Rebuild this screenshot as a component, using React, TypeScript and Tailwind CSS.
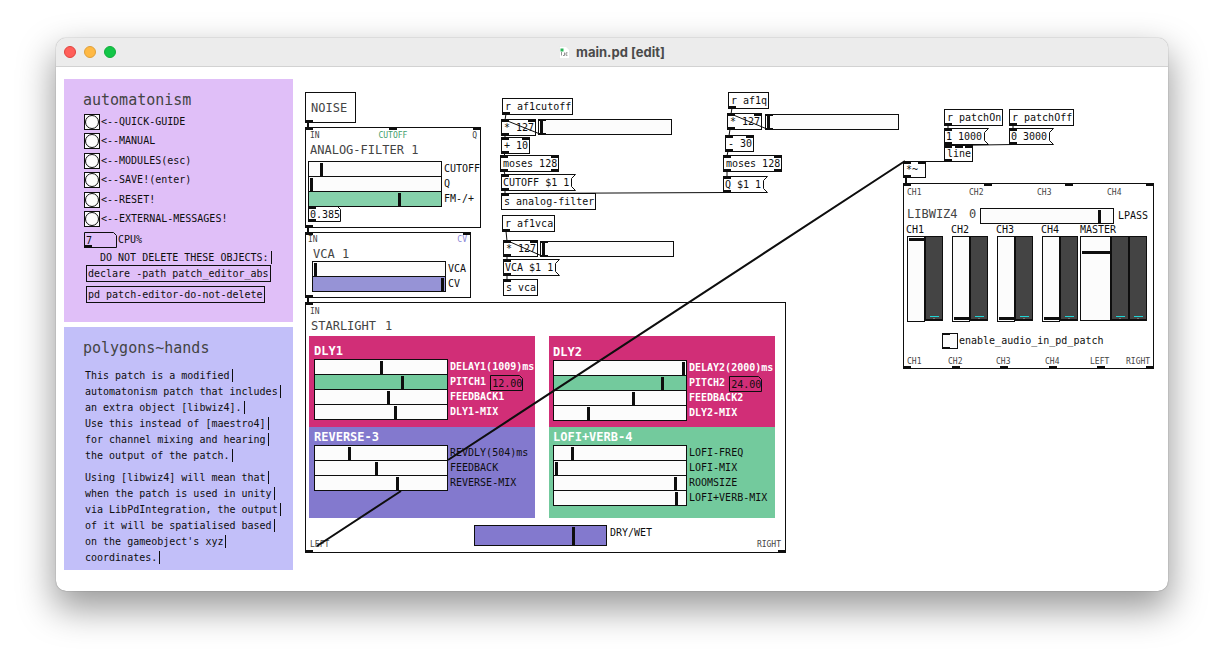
import { useId, type ReactNode } from "react";

function Ports({ count, side }: { count: number; side: "top" | "bottom" }) {
  if (count === 0) return null;
  return (
    <span
      aria-hidden="true"
      className={`pointer-events-none absolute -inset-x-px flex justify-between ${
        side === "top" ? "-top-px" : "-bottom-px"
      }`}
    >
      {Array.from({ length: count }, (_, i) => (
        <span key={i} className="h-[3px] w-2 bg-[#0e0e0e]" />
      ))}
    </span>
  );
}

type NodeProps = { at: string; ins?: number; outs?: number; children: ReactNode };

function Obj({ at, ins = 0, outs = 0, children }: NodeProps) {
  return (
    <div className={`absolute h-[17px] whitespace-pre border border-[#0e0e0e] pr-px pl-[2px] leading-[15px] ${at}`}>
      <Ports count={ins} side="top" />
      {children}
      <Ports count={outs} side="bottom" />
    </div>
  );
}

function Message({ at, children }: NodeProps) {
  return (
    <div className={`absolute flex h-[17px] ${at}`}>
      <div className="relative whitespace-pre border-y border-l border-[#0e0e0e] pr-px pl-px leading-[15px]">
        {children}
        <span className="absolute -top-px -left-px h-[3px] w-2 bg-[#0e0e0e]" />
        <span className="absolute -bottom-px -left-px h-[3px] w-2 bg-[#0e0e0e]" />
      </div>
      <svg width="6" height="17" viewBox="0 0 6 17" fill="none" stroke="#0e0e0e" aria-hidden="true">
        <path d="M0 .5H5.500L1.500 4.500V12.500L5.500 16.500H0" />
      </svg>
    </div>
  );
}

const thumb =
  "[&::-webkit-slider-thumb]:w-[3px] [&::-webkit-slider-thumb]:appearance-none [&::-webkit-slider-thumb]:bg-[#0e0e0e]";

function HSlider({
  id,
  label,
  value,
  look = "h-4 bg-[#fcfcfc]",
  size = "w-[134px] [&::-webkit-slider-thumb]:h-[13px]",
}: {
  id?: string;
  label?: string;
  value: number;
  look?: string;
  size?: string;
}) {
  return (
    <input
      id={id}
      aria-label={label}
      type="range"
      min={0}
      max={129}
      defaultValue={value}
      className={`m-0 block shrink-0 appearance-none border border-[#0e0e0e] ${thumb} ${size} ${look}`}
    />
  );
}

function SliderRow({
  label,
  value,
  look,
  tone = "",
  children,
}: {
  label: string;
  value: number;
  look?: string;
  tone?: string;
  children?: ReactNode;
}) {
  const id = useId();
  return (
    <div className="-mt-px flex h-4 gap-[2px] whitespace-nowrap first:mt-0">
      <HSlider id={id} value={value} look={look} />
      <label htmlFor={id} className={`leading-4 ${tone}`}>
        {label}
      </label>
      {children}
    </div>
  );
}

function NumberBox({ value, label, id }: { value: string; label?: string; id?: string }) {
  return (
    <span className="relative block h-4 w-[33px]">
      <svg
        className="absolute inset-0"
        width="33"
        height="16"
        viewBox="0 0 33 16"
        fill="none"
        stroke="#0e0e0e"
        aria-hidden="true"
      >
        <path d="M.5 .5H29.500L32.500 3.500V15.500H.5Z" />
      </svg>
      <input
        id={id}
        aria-label={label}
        defaultValue={value}
        className="relative block h-4 w-full bg-transparent pt-px pl-[2px] leading-[15px] outline-none"
      />
    </span>
  );
}

function Bang({ label }: { label: string }) {
  const id = useId();
  return (
    <li className="flex h-4 gap-px">
      <button id={id} type="button" className="h-4 w-4 border border-[#0e0e0e] bg-[#fcfcfc]">
        <svg width="14" height="14" viewBox="0 0 14 14" fill="none" stroke="#0e0e0e" aria-hidden="true">
          <circle cx="7" cy="7" r="6.500" />
        </svg>
      </button>
      <label htmlFor={id} className="leading-[15px]">
        {label}
      </label>
    </li>
  );
}

function CommentLines({ lines }: { lines: string[] }) {
  return (
    <p>
      {lines.map((line) => (
        <span key={line} className="flex h-4 items-center">
          <span className="whitespace-pre border-r border-[#0e0e0e] pr-[2px] leading-[13px]">{line}</span>
        </span>
      ))}
    </p>
  );
}

function VSlider({ label, value, look }: { label: string; value: number; look: string }) {
  return (
    <input
      type="range"
      aria-label={label}
      min={0}
      max={100}
      defaultValue={value}
      className={`m-0 block appearance-none border border-[#0e0e0e] bg-[#fcfcfc] [direction:rtl] [writing-mode:vertical-lr] [&::-webkit-slider-thumb]:h-[3px] [&::-webkit-slider-thumb]:appearance-none [&::-webkit-slider-thumb]:bg-[#0e0e0e] ${look}`}
    />
  );
}

function Meter() {
  return (
    <span className="flex h-[85px] w-[18px] flex-col items-center justify-end border-x border-t border-b-2 border-[#0e0e0e] bg-[#444]">
      <span className="h-px w-[9px] bg-[#1fd6d6]" />
      <span className="mt-px h-px w-[2px] bg-[#777]" />
    </span>
  );
}

function Sidebar() {
  const cpu = useId();
  return (
    <aside className="flex w-[229px] shrink-0 flex-col gap-[5px]">
      <section className="h-[243px] bg-[#e0bff8] pt-3 pl-5">
        <h2 className="-ml-px text-[15px] leading-[18px] text-[#444]">automatonism</h2>
        <ul className="mt-[5px] flex h-[113px] flex-col justify-between">
          {[
            "<--QUICK-GUIDE",
            "<--MANUAL",
            "<--MODULES(esc)",
            "<--SAVE!(enter)",
            "<--RESET!",
            "<--EXTERNAL-MESSAGES!",
          ].map((label) => (
            <Bang key={label} label={label} />
          ))}
        </ul>
        <div className="relative mt-[5px] flex gap-px">
          <NumberBox id={cpu} value="7" />
          <label htmlFor={cpu} className="leading-[15px]">
            CPU%
          </label>
          <span className="absolute bottom-0 left-0 h-[3px] w-2 bg-[#0e0e0e]" />
        </div>
        <div className="mt-px ml-4">
          <CommentLines lines={["DO NOT DELETE THESE OBJECTS:"]} />
        </div>
        <div className="ml-[2px] flex flex-col items-start gap-1">
          <div className="h-[17px] border border-[#0e0e0e] px-px leading-[15px]">
            declare -path patch_editor_abs
          </div>
          <div className="h-[17px] border border-[#0e0e0e] px-px leading-[15px]">
            pd patch-editor-do-not-delete
          </div>
        </div>
      </section>
      <section className="bg-[#c2bff9] pt-3 pb-[5px] pl-5">
        <h2 className="-ml-px text-[15px] leading-[18px] text-[#444]">polygons~hands</h2>
        <div className="mt-[10px] ml-px flex flex-col gap-[6px]">
          <CommentLines
            lines={[
              "This patch is a modified",
              "automatonism patch that includes",
              "an extra object [libwiz4].",
              "Use this instead of [maestro4]",
              "for channel mixing and hearing",
              "the output of the patch.",
            ]}
          />
          <CommentLines
            lines={[
              "Using [libwiz4] will mean that",
              "when the patch is used in unity",
              "via LibPdIntegration, the output",
              "of it will be spatialised based",
              "on the gameobject's xyz",
              "coordinates.",
            ]}
          />
        </div>
      </section>
    </aside>
  );
}

function AnalogFilter() {
  return (
    <section className="absolute top-[48px] left-[5px] h-[101px] w-[176px] border border-[#0e0e0e] pt-[3px]">
      <Ports count={3} side="top" />
      <div className="flex justify-between pr-[3px] pl-1 text-[8px] leading-[10px] text-[#444]">
        <span>IN</span>
        <span className="pr-[6px] text-[#3fa06d]">CUTOFF</span>
        <span>Q</span>
      </div>
      <h3 className="mt-px pl-1 text-xs leading-4 text-[#444]">ANALOG-FILTER 1</h3>
      <div className="mt-[3px] pl-[2px]">
        <SliderRow label="CUTOFF" value={11} />
        <SliderRow label="Q" value={1} />
        <SliderRow label="FM-/+" value={89} look="h-4 bg-[#86d1ab]" />
        <div className="relative -mt-px">
          <NumberBox value="0.385" label="FM amount" />
          <span className="absolute top-0 left-0 h-[3px] w-2 bg-[#0e0e0e]" />
          <span className="absolute bottom-0 left-0 h-[3px] w-2 bg-[#0e0e0e]" />
        </div>
      </div>
      <Ports count={1} side="bottom" />
    </section>
  );
}

function Vca() {
  return (
    <section className="absolute top-[153px] left-[5px] h-[66px] w-[166px] border border-[#0e0e0e] pt-[2px]">
      <Ports count={2} side="top" />
      <div className="flex justify-between pr-[3px] pl-[2px] text-[8px] leading-[10px] text-[#444]">
        <span>IN</span>
        <span className="text-[#8a84d6]">CV</span>
      </div>
      <h3 className="mt-px pl-[7px] text-xs leading-4 text-[#444]">VCA 1</h3>
      <div className="-mt-px pl-[6px]">
        <SliderRow label="VCA" value={1} />
        <SliderRow label="CV" value={128} look="h-4 bg-[#9693d6]" />
      </div>
      <Ports count={1} side="bottom" />
    </section>
  );
}

function Starlight() {
  const wet = useId();
  return (
    <section className="absolute top-[223px] left-[5px] h-[251px] w-[481px] border border-[#0e0e0e] pt-[3px]">
      <Ports count={1} side="top" />
      <div className="pl-1 text-[8px] leading-[11px] text-[#444]">IN</div>
      <h3 className="mt-px flex gap-[9px] pl-[5px] text-xs leading-4 text-[#444]">
        <span>STARLIGHT</span>
        <span>1</span>
      </h3>
      <div className="mt-[2px] ml-[3px] grid grid-cols-[226px_226px] grid-rows-[91px_91px] gap-x-[14px]">
        <div className="bg-[#d12e77] pt-2 pl-[5px]">
          <h4 className="text-xs leading-[15px] font-bold text-white">DLY1</h4>
          <div>
            <SliderRow label="DELAY1(1009)ms" value={65} tone="font-bold text-white" />
            <SliderRow label="PITCH1" value={86} look="h-4 bg-[#73ca9d]" tone="font-bold text-white">
              <span className="mt-px ml-[2px]">
                <NumberBox value="12.00" label="Pitch 1 value" />
              </span>
            </SliderRow>
            <SliderRow label="FEEDBACK1" value={72} tone="font-bold text-white" />
            <SliderRow label="DLY1-MIX" value={79} tone="font-bold text-white" />
          </div>
        </div>
        <div className="bg-[#d12e77] pt-[9px] pl-1">
          <h4 className="text-xs leading-[15px] font-bold text-white">DLY2</h4>
          <div>
            <SliderRow label="DELAY2(2000)ms" value={128} tone="font-bold text-white" />
            <SliderRow label="PITCH2" value={107} look="h-4 bg-[#73ca9d]" tone="font-bold text-white">
              <span className="mt-px ml-[2px]">
                <NumberBox value="24.00" label="Pitch 2 value" />
              </span>
            </SliderRow>
            <SliderRow label="FEEDBACK2" value={78} tone="font-bold text-white" />
            <SliderRow label="DLY2-MIX" value={33} tone="font-bold text-white" />
          </div>
        </div>
        <div className="bg-[#8379ce] pt-[3px] pl-[5px]">
          <h4 className="text-xs leading-[15px] font-bold text-white">REVERSE-3</h4>
          <div>
            <SliderRow label="REVDLY(504)ms" value={33} />
            <SliderRow label="FEEDBACK" value={60} />
            <SliderRow label="REVERSE-MIX" value={81} />
          </div>
        </div>
        <div className="bg-[#73ca9d] pt-[3px] pl-1">
          <h4 className="text-xs leading-[15px] font-bold text-white">LOFI+VERB-4</h4>
          <div>
            <SliderRow label="LOFI-FREQ" value={17} />
            <SliderRow label="LOFI-MIX" value={1} />
            <SliderRow label="ROOMSIZE" value={120} />
            <SliderRow label="LOFI+VERB-MIX" value={121} />
          </div>
        </div>
      </div>
      <div className="mt-[7px] flex h-[25px] pr-1 pl-1">
        <span className="w-[164px] self-end text-[8px] leading-[10px] text-[#444]">LEFT</span>
        <HSlider
          id={wet}
          value={98}
          size="w-[133px] [&::-webkit-slider-thumb]:h-[18px]"
          look="h-[21px] bg-[#8379ce]"
        />
        <label htmlFor={wet} className="ml-[3px] leading-[15px]">
          DRY/WET
        </label>
        <span className="ml-auto self-end text-[8px] leading-[10px] text-[#444]">RIGHT</span>
      </div>
      <Ports count={2} side="bottom" />
    </section>
  );
}

function Libwiz() {
  const lpass = useId();
  const enable = useId();
  return (
    <section className="absolute top-[104px] left-[603px] h-[186px] w-[251px] border border-[#0e0e0e] pt-1 pl-[3px]">
      <Ports count={4} side="top" />
      <div className="grid grid-cols-[62px_68px_70px_auto] text-[8px] leading-[10px] text-[#444]">
        <span>CH1</span>
        <span>CH2</span>
        <span>CH3</span>
        <span>CH4</span>
      </div>
      <div className="mt-[10px] flex h-4 items-start">
        <h3 className="flex text-xs leading-[13px] text-[#444]">
          <span className="w-[62px]">LIBWIZ4</span>
          <span className="w-[11px]">0</span>
        </h3>
        <HSlider id={lpass} value={117} />
        <label htmlFor={lpass} className="ml-1 leading-4">
          LPASS
        </label>
      </div>
      <div className="flex">
        <div className="flex gap-[9px]">
          {[
            { name: "CH1", value: 99 },
            { name: "CH2", value: 1 },
            { name: "CH3", value: 1 },
            { name: "CH4", value: 1 },
          ].map(({ name, value }) => (
            <div key={name}>
              <div className="-ml-px leading-3">{name}</div>
              <div className="flex">
                <VSlider label={name} value={value} look="h-[86px] w-[18px] [&::-webkit-slider-thumb]:w-[15px]" />
                <Meter />
              </div>
            </div>
          ))}
        </div>
        <div className="ml-[2px]">
          <div className="leading-3">MASTER</div>
          <div className="flex">
            <VSlider label="Master" value={83} look="h-[85px] w-[31px] [&::-webkit-slider-thumb]:w-[28px]" />
            <Meter />
            <Meter />
          </div>
        </div>
      </div>
      <div className="mt-[11px] flex gap-px pl-[35px]">
        <span className="relative block h-4 w-4">
          <input id={enable} type="checkbox" className="block h-4 w-4 appearance-none border border-[#0e0e0e] bg-[#fcfcfc]" />
          <span className="absolute top-0 left-0 h-[2px] w-2 bg-[#0e0e0e]" />
          <span className="absolute bottom-0 left-0 h-[2px] w-2 bg-[#0e0e0e]" />
        </span>
        <label htmlFor={enable} className="leading-[15px]">
          enable_audio_in_pd_patch
        </label>
      </div>
      <div className="mt-2 grid grid-cols-[41px_48px_49px_45px_36px_auto] text-[8px] leading-[10px] text-[#444]">
        <span>CH1</span>
        <span>CH2</span>
        <span>CH3</span>
        <span>CH4</span>
        <span>LEFT</span>
        <span>RIGHT</span>
      </div>
      <Ports count={6} side="bottom" />
    </section>
  );
}

function Wires() {
  return (
    <svg
      className="pointer-events-none absolute top-0 left-0"
      width="868"
      height="491"
      viewBox="300 79 868 491"
      fill="none"
      stroke="#0e0e0e"
      aria-hidden="true"
    >
      <g strokeWidth="2">
        <path d="M308 122V128M308 227V233M308 297V303M906 177V184" />
        <path d="M317 546L401 491M448 460L905 161" />
      </g>
      <path d="M506 114L505 120M505 135V138M505 153L504 156M504 171L505 175M505 190V194" />
      <path d="M540 134L505 120M542 256L508 241M767 129L731 114" />
      <path d="M506 231L507 241M507 256V260M507 275V280" />
      <path d="M732 108L731 114M730 129L729 136M728 151L727 156M727 171V177M727 192.500L505 193.500" />
      <path d="M948 125V129M1013 125V129M948 144V146M1013 144.500L948 145.500M948 161.500H922" />
    </svg>
  );
}

function Patch() {
  return (
    <main className="relative min-h-[491px] flex-1">
      <div className="absolute top-[13px] left-[5px] h-[31px] w-[51px] border border-[#0e0e0e] pl-[5px] text-xs leading-[30px] text-[#444]">
        NOISE
        <Ports count={1} side="bottom" />
      </div>
      <AnalogFilter />
      <Vca />
      <Starlight />

      <Obj at="left-[202px] top-[19px]" outs={1}>r af1cutoff</Obj>
      <Obj at="left-[201px] top-[40px]" ins={2} outs={1}>* 127</Obj>
      <div className="absolute top-[40px] left-[238px]">
        <HSlider label="Cutoff depth" value={1} />
        <span className="absolute top-0 left-0 h-[2px] w-2 bg-[#0e0e0e]" />
        <span className="absolute bottom-0 left-0 h-[2px] w-2 bg-[#0e0e0e]" />
      </div>
      <Obj at="left-[201px] top-[58px]" ins={2} outs={1}>+ 10</Obj>
      <Obj at="left-[200px] top-[76px]" ins={2} outs={2}>moses 128</Obj>
      <Message at="left-[201px] top-[95px]">CUTOFF $1 1</Message>
      <Obj at="left-[201px] top-[114px]" ins={1}>s analog-filter</Obj>

      <Obj at="left-[202px] top-[136px]" outs={1}>r af1vca</Obj>
      <Obj at="left-[203px] top-[161px]" ins={2} outs={1}>* 127</Obj>
      <div className="absolute top-[162px] left-[240px]">
        <HSlider label="VCA depth" value={1} />
        <span className="absolute top-0 left-0 h-[2px] w-2 bg-[#0e0e0e]" />
        <span className="absolute bottom-0 left-0 h-[2px] w-2 bg-[#0e0e0e]" />
      </div>
      <Message at="left-[203px] top-[180px]">VCA $1 1</Message>
      <Obj at="left-[203px] top-[200px]" ins={1}>s vca</Obj>

      <Obj at="left-[428px] top-[13px]" outs={1}>r af1q</Obj>
      <Obj at="left-[427px] top-[34px]" ins={2} outs={1}>* 127</Obj>
      <div className="absolute top-[35px] left-[465px]">
        <HSlider label="Q depth" value={1} />
        <span className="absolute top-0 left-0 h-[2px] w-2 bg-[#0e0e0e]" />
        <span className="absolute bottom-0 left-0 h-[2px] w-2 bg-[#0e0e0e]" />
      </div>
      <Obj at="left-[425px] top-[56px]" ins={2} outs={1}>- 30</Obj>
      <Obj at="left-[423px] top-[76px]" ins={2} outs={2}>moses 128</Obj>
      <Message at="left-[423px] top-[97px]">Q $1 1</Message>

      <Obj at="left-[644px] top-[30px]" outs={1}>r patchOn</Obj>
      <Obj at="left-[709px] top-[30px]" outs={1}>r patchOff</Obj>
      <Message at="left-[644px] top-[49px]">1 1000</Message>
      <Message at="left-[709px] top-[49px]">0 3000</Message>
      <Obj at="left-[644px] top-[66px]" ins={3} outs={1}>line</Obj>
      <Obj at="left-[603px] top-[82px] w-[23px]" ins={2} outs={1}>*~</Obj>
      <Libwiz />
      <Wires />
    </main>
  );
}

export default function App() {
  return (
    <div className="min-h-screen bg-white px-14 pt-[38px] pb-[74px]">
      <div className="overflow-hidden rounded-[10px] bg-white shadow-[0_0_1px_rgba(0,0,0,0.6),0_16px_36px_2px_rgba(0,0,0,0.4)]">
        <header className="grid h-[29px] grid-cols-[1fr_auto_1fr] items-center border-b border-[#d2d2d2] bg-[#ececec] px-2">
          <div className="flex gap-2">
            <button type="button" aria-label="Close" className="h-3 w-3 rounded-full border border-[#e0443e] bg-[#ff5f5a]" />
            <button type="button" aria-label="Minimize" className="h-3 w-3 rounded-full border border-[#dfa03a] bg-[#ffb944]" />
            <button type="button" aria-label="Zoom" className="h-3 w-3 rounded-full border border-[#12ad3b] bg-[#13c648]" />
          </div>
          <div className="flex items-center gap-[6px]">
            <svg width="11" height="13" viewBox="0 0 11 13" aria-hidden="true">
              <path d="M.5 .5H7L10.500 4V12.500H.5Z" fill="#fff" stroke="#e2e2e2" strokeWidth=".5" />
              <rect x="1.500" y="2.500" width="3" height="3" fill="#2bb558" />
              <path d="M2.500 6V9.500M4 9.500H5.500M5.500 6.500V9.500M8.500 6.800H7V9.300H8.500" fill="none" stroke="#777" strokeWidth=".8" />
            </svg>
            <h1 className="font-['Inter',sans-serif] text-[13px] leading-4 font-bold text-[#4a4a4a]">main.pd [edit]</h1>
          </div>
        </header>
        <div className="flex gap-[7px] pt-3 pb-[21px] pl-2 font-['DejaVu_Sans_Mono',monospace] text-[10px] text-[#0e0e0e]">
          <Sidebar />
          <Patch />
        </div>
      </div>
    </div>
  );
}
